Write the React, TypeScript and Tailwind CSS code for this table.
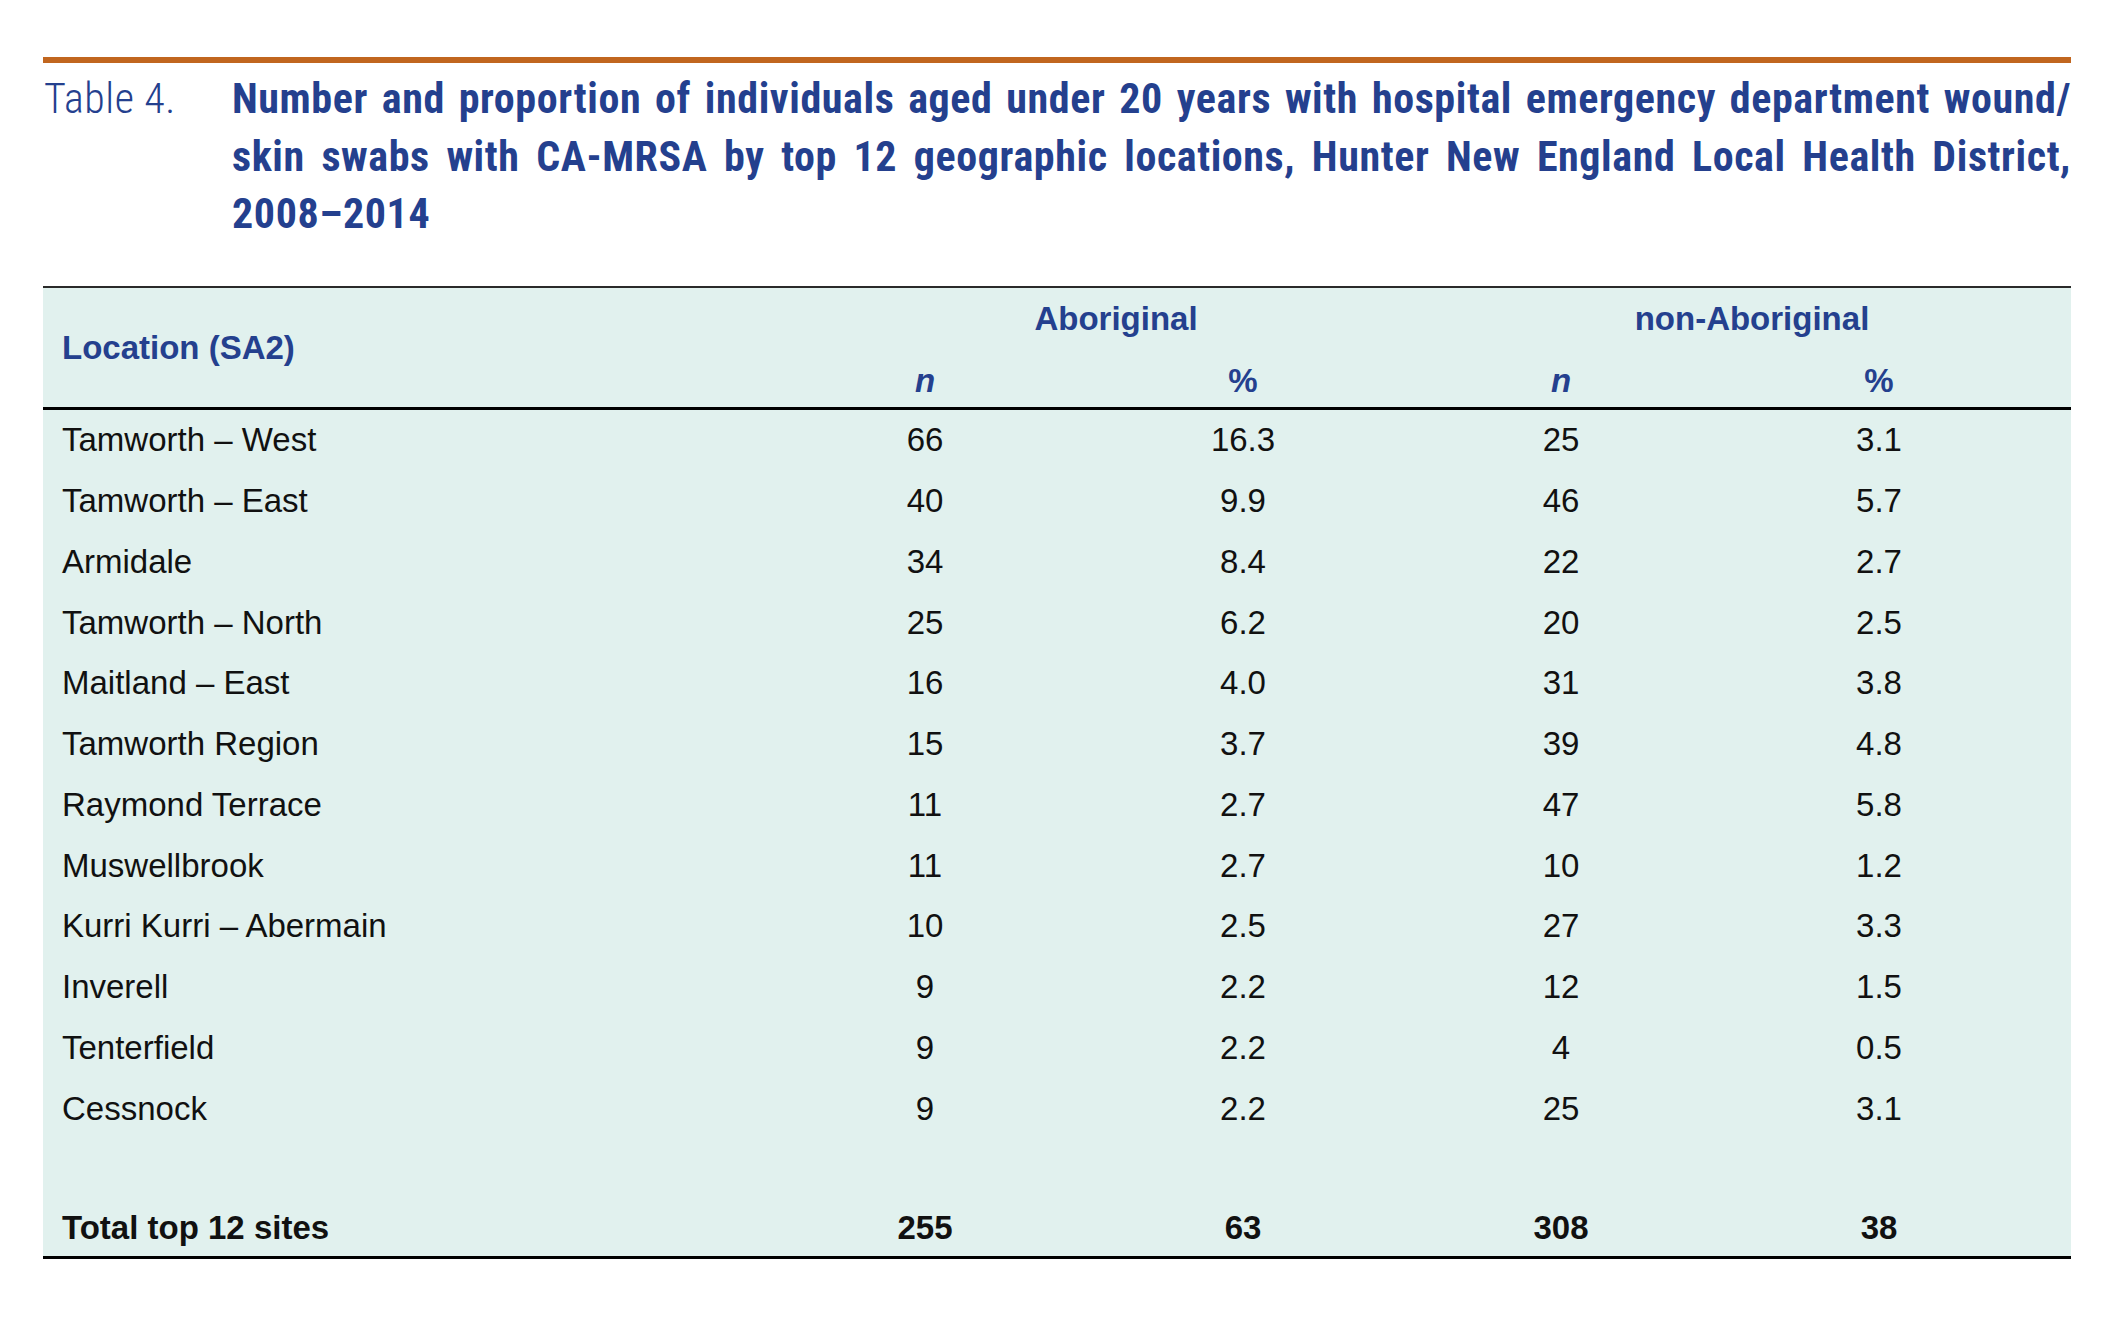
import React from "react";

const rows: [string, string, string, string, string][] = [
  ["Tamworth – West", "66", "16.3", "25", "3.1"],
  ["Tamworth – East", "40", "9.9", "46", "5.7"],
  ["Armidale", "34", "8.4", "22", "2.7"],
  ["Tamworth – North", "25", "6.2", "20", "2.5"],
  ["Maitland – East", "16", "4.0", "31", "3.8"],
  ["Tamworth Region", "15", "3.7", "39", "4.8"],
  ["Raymond Terrace", "11", "2.7", "47", "5.8"],
  ["Muswellbrook", "11", "2.7", "10", "1.2"],
  ["Kurri Kurri – Abermain", "10", "2.5", "27", "3.3"],
  ["Inverell", "9", "2.2", "12", "1.5"],
  ["Tenterfield", "9", "2.2", "4", "0.5"],
  ["Cessnock", "9", "2.2", "25", "3.1"],
];

const grid = "grid grid-cols-[723px_318px_318px_318px_318px_1fr]";

export default function App() {
  return (
    <div className="min-h-[1335px] w-[2112px] bg-white pl-[43px] pt-[57px] font-['Liberation_Sans',Arial,sans-serif] overflow-hidden">
      <div className="w-[2028px]">
        <div className="h-[6px] bg-[#c1661f]" />
        <div className="flex pt-[7px] text-[#24408e]">
          <div className="w-[189px] shrink-0 pl-[1px] text-[42px] leading-[57.5px] tracking-[0.5px] font-light font-['Roboto_Condensed','Open_Sans_Condensed',sans-serif]">
            Table 4.
          </div>
          <div className="flex-1 overflow-hidden text-[42px] leading-[57.5px] tracking-[0.6px] font-bold font-['Roboto_Condensed','Open_Sans_Condensed',sans-serif]">
            <div className="text-justify [text-align-last:justify] whitespace-nowrap">
              Number and proportion of individuals aged under 20 years with hospital emergency department wound/
            </div>
            <div className="text-justify [text-align-last:justify] whitespace-nowrap">
              skin swabs with CA-MRSA by top 12 geographic locations, Hunter New England Local Health District,
            </div>
            <div>2008–2014</div>
          </div>
        </div>

        <div className="mt-[43px] border-t-2 border-[#2a2a2a] border-b-[3px] border-b-black bg-[#e1f1ee] text-[33px] leading-none">
          <div className={`${grid} border-b-[3px] border-black text-[#24408e] font-bold`}>
            <div className="row-span-2 flex items-center pl-[19px]">Location (SA2)</div>
            <div className="col-span-2 flex h-[62px] items-center justify-center pl-[64px]">Aboriginal</div>
            <div className="col-span-2 flex h-[62px] items-center justify-center pl-[64px]">non-Aboriginal</div>
            <div className="row-span-2" />
            <div className="flex h-[57px] items-center justify-center pt-[5px] italic">n</div>
            <div className="flex h-[57px] items-center justify-center pt-[5px]">%</div>
            <div className="flex h-[57px] items-center justify-center pt-[5px] italic">n</div>
            <div className="flex h-[57px] items-center justify-center pt-[5px]">%</div>
          </div>
          {rows.map((r) => (
            <div key={r[0]} className={`${grid} h-[60.75px] text-[#111]`}>
              <div className="flex items-center pl-[19px]">{r[0]}</div>
              <div className="flex items-center justify-center">{r[1]}</div>
              <div className="flex items-center justify-center">{r[2]}</div>
              <div className="flex items-center justify-center">{r[3]}</div>
              <div className="flex items-center justify-center">{r[4]}</div>
              <div />
            </div>
          ))}
          <div className="h-[60px]" />
          <div className={`${grid} h-[57px] font-bold text-[#111]`}>
            <div className="flex items-center pl-[19px]">Total top 12 sites</div>
            <div className="flex items-center justify-center">255</div>
            <div className="flex items-center justify-center">63</div>
            <div className="flex items-center justify-center">308</div>
            <div className="flex items-center justify-center">38</div>
            <div />
          </div>
        </div>
      </div>
    </div>
  );
}
